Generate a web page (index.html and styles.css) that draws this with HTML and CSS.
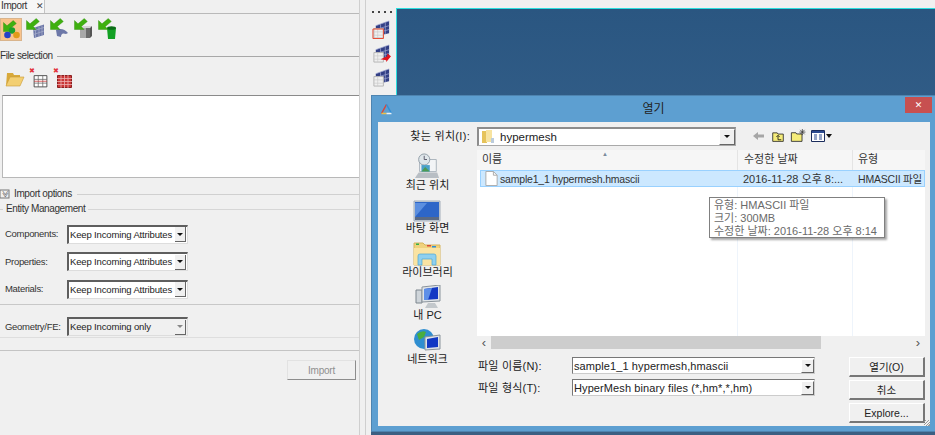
FILE: index.html
```html
<!DOCTYPE html>
<html lang="ko">
<head>
<meta charset="utf-8">
<title>Import</title>
<link rel="stylesheet" href="styles.css">
</head>
<body>
<svg class="defs" width="0" height="0">
  <defs>
    <symbol id="arrow" viewBox="0 0 14 12"><path d="M1 2.500 L1 11.500 L10.500 11.500 L7.800 8.500 L13.800 3.500 L10.800 .5 L4.500 5.800 Z" fill="#3fb010" stroke="#2c8a08" stroke-width=".4"/></symbol>
    <symbol id="grid" viewBox="0 0 20 20">
      <path d="M1.500 3.500H18.500V18.500H1.500Z" fill="#fff" stroke="#444" stroke-width="1.200"/>
      <path d="M1.500 8.500H18.500M1.500 13.500H18.500M7 3.500V18.500M13 3.500V18.500" stroke="#666"/>
      <path d="M1.500 11H18.500" stroke="#c33"/>
    </symbol>
    <symbol id="shell" viewBox="0 0 20 20">
      <path d="M4 6 L18 1 V14 L4 17Z" fill="#323f85"/>
      <path d="M4 6 L18 1 M4 10 L18 6 M4 14 L18 10 M9 4.500V16 M14 3V15" stroke="#9aa3cf" stroke-width=".8" fill="none"/>
      <path d="M2 9H12V19H2Z" fill="#efefef" stroke="#b5b5b5"/>
      <path d="M2 12.500H12M2 16H12M6 9V19" stroke="#c8c8c8" stroke-width=".7"/>
    </symbol>
    <symbol id="yfolder" viewBox="0 0 16 16"><path d="M1.500 3.500H7L8 5H14.500V14H1.500Z" fill="#f5ec7a" stroke="#222"/></symbol>
  </defs>
</svg>

<main class="app">
  <section class="panel">
    <div class="tabbar"><div class="tab"><span>Import</span><span class="tab-x">✕</span></div></div>

    <div class="toolbar">
      <span class="tool tool-on">
        <svg width="22" height="22" viewBox="0 0 22 22"><use href="#arrow" x="2" y="1" width="15" height="12"/><circle cx="12" cy="11.500" r="3.200" fill="#1aa02c"/><circle cx="7.500" cy="16" r="3.300" fill="#2340c8"/><circle cx="16.500" cy="16" r="3.300" fill="#e09a1a"/></svg>
      </span>
      <span class="tool">
        <svg width="22" height="22" viewBox="0 0 22 22"><path d="M9 10 L20 6.500 V17 L10 20Z" fill="#6d78a8"/><path d="M11.500 9.500V19.500M15 8.500V18.500M18 7.500V17.500M9 13 L20 9.500M9.500 16.500 L20 13" stroke="#a9b0cd" stroke-width=".7"/><use href="#arrow" x="1" y="0" width="15" height="12"/></svg>
      </span>
      <span class="tool">
        <svg width="22" height="22" viewBox="0 0 22 22"><path d="M8 12 Q15 9 20 15 L18 16 Q13 14 13 19 L9 18Z" fill="#6d78a8"/><use href="#arrow" x="1" y="0" width="15" height="12"/></svg>
      </span>
      <span class="tool">
        <svg width="22" height="22" viewBox="0 0 22 22"><path d="M8 10H18V20H8Z" fill="#a8a8a8"/><path d="M14 10H18V20H14Z" fill="#6b6b6b"/><path d="M8 10 L11 8H20 L18 10Z" fill="#d4d4d4"/><path d="M18 10 L20 8V18 L18 20Z" fill="#555"/><use href="#arrow" x="1" y="0" width="15" height="12"/></svg>
      </span>
      <span class="tool">
        <svg width="22" height="22" viewBox="0 0 22 22"><path d="M11 10H20L19 21H12Z" fill="#13a124"/><ellipse cx="15.500" cy="10" rx="4.500" ry="1.800" fill="#0c6d17"/><use href="#arrow" x="1" y="0" width="15" height="12"/></svg>
      </span>
    </div>

    <div class="legend legend-file"><span>File selection</span><i></i></div>

    <div class="file-tools">
      <svg class="file-tool" width="20" height="18" viewBox="0 0 20 18"><path d="M1 16 L2 3H8L9 5H15V7H6Z" fill="#d8a93a"/><path d="M1 16 L5 7H19L15 16Z" fill="#f3cf72" stroke="#c99a35" stroke-width=".6"/></svg>
      <span class="file-tool tool-del"><span class="del-x">✖</span><svg width="15" height="15" viewBox="0 0 20 20"><use href="#grid" width="20" height="20"/></svg></span>
      <span class="file-tool tool-del"><span class="del-x">✖</span><svg width="15" height="13" viewBox="0 0 15 13"><path d="M.5 .5H14.500V12.500H.5Z" fill="#c93636" stroke="#8c2020"/><path d="M0 3.500H15M0 6.500H15M0 9.500H15M4 0V13M7.500 0V13M11 0V13" stroke="#eeb0b0" stroke-width=".8"/></svg></span>
    </div>

    <div class="filelist"></div>

    <div class="legend legend-options"><span class="chev">≫</span><span>Import options</span><i></i></div>
    <div class="legend legend-entity"><b></b><span>Entity Management</span><i></i></div>

    <div class="form-row"><span class="form-label">Components:</span><div class="combo"><span>Keep Incoming Attributes</span><span class="combo-btn"></span></div></div>
    <div class="form-row"><span class="form-label">Properties:</span><div class="combo"><span>Keep Incoming Attributes</span><span class="combo-btn"></span></div></div>
    <div class="form-row"><span class="form-label">Materials:</span><div class="combo"><span>Keep Incoming Attributes</span><span class="combo-btn"></span></div></div>
    <hr class="rule rule-a">
    <div class="form-row form-row-geo"><span class="form-label">Geometry/FE:</span><div class="combo combo-off"><span>Keep Incoming only</span><span class="combo-btn"></span></div></div>
    <hr class="rule rule-b">
    <hr class="rule rule-c">
    <div class="import-row"><button class="import-btn" type="button">Import</button></div>
  </section>

  <aside class="strip">
    <div class="grip"></div>
    <svg class="strip-icon" width="19" height="19" viewBox="0 0 20 20"><use href="#shell" width="20" height="20"/><path d="M1 9.500H12V19.500H1Z" fill="none" stroke="#e8452c"/></svg>
    <svg class="strip-icon" width="19" height="19" viewBox="0 0 20 20"><use href="#shell" width="20" height="20"/><path d="M9 16 L16 13 L16 10 L20 13 L15 19 L15 17Z" fill="#e2141c"/></svg>
    <svg class="strip-icon" width="19" height="19" viewBox="0 0 20 20"><use href="#shell" width="20" height="20"/></svg>
  </aside>

  <div class="canvas"></div>
</main>

<section class="dialog">
  <header class="titlebar">
    <svg class="app-logo" width="13" height="13" viewBox="0 0 13 13"><path d="M6.500 1.500 L1.500 10.500" stroke="#d6473a" stroke-width="1.500"/><path d="M6.500 1.500 L11.500 10.500" stroke="#2f8fd8" stroke-width="1.500"/><path d="M1.500 10.500 H6.500" stroke="#e8c04a" stroke-width="1.500"/><path d="M6.500 10.500 H11.500" stroke="#eef2f6" stroke-width="1.500"/></svg>
    <h1 class="dialog-title">열기</h1>
    <button class="close-btn" type="button">✕</button>
  </header>
  <div class="client">
    <div class="lookin">
      <span class="lookin-label">찾는 위치(I):</span>
      <div class="lookin-combo">
        <svg width="14" height="15" viewBox="0 0 14 15"><path d="M1 2H6V14H1Z" fill="#e6c35a"/><path d="M5 1H11V13H5Z" fill="#f7e3a0"/><path d="M10 9H13V14H10Z" fill="#bcd"/></svg>
        <span class="lookin-text">hypermesh</span>
        <span class="win-btn"></span>
      </div>
      <div class="nav-tools">
        <svg width="14" height="12" viewBox="0 0 14 12"><path d="M1 6 L6 2V4.500H12V7.500H6V10Z" fill="#a6a6a6"/></svg>
        <svg width="14" height="13" viewBox="0 0 16 16"><use href="#yfolder" width="16" height="16"/><path d="M8 12V7M6 8.500 L8 6.500 L10 8.500M8 12H12" stroke="#111" fill="none"/></svg>
        <svg width="16" height="14" viewBox="0 0 18 16"><use href="#yfolder" y="1" width="15" height="15"/><path d="M14 0V7M10.500 3.500H17.500M11.500 1 L16.500 6M16.500 1 L11.500 6" stroke="#333" stroke-width=".8"/></svg>
        <svg width="21" height="12" viewBox="0 0 21 12"><path d="M.5 .5H13.500V11.500H.5Z" fill="#fff" stroke="#1a2c5c"/><path d="M1 1H13V3H1Z" fill="#2c4a90"/><path d="M3 5H6M3 7H6M3 9H6M8 5H11M8 7H11M8 9H11" stroke="#2c4a90"/><path d="M15 4H21L18 8Z" fill="#111"/></svg>
      </div>
    </div>

    <div class="browser">
      <nav class="places">
        <div class="place">
          <svg width="28" height="26" viewBox="0 0 28 28"><path d="M6 7H24V20H6Z" fill="#f2f4f6" stroke="#a9b2bb"/><circle cx="11" cy="7" r="6" fill="#dfe6ea" stroke="#8d99a3"/><path d="M11 3V7H14" stroke="#556" fill="none"/><path d="M8 13H17V20H8Z" fill="#4aa0c8"/><path d="M8 20 L12 15 L17 20Z" fill="#4d9a52"/><path d="M1 27 L5 21H25 L27 27Z" fill="#b8bec4"/></svg>
          <span>최근 위치</span>
        </div>
        <div class="place">
          <svg width="28" height="22" viewBox="0 0 28 22"><path d="M1 1H27V21H1Z" fill="#c9d2dc" stroke="#a3aeba"/><path d="M2 2H26V17H2Z" fill="#2d66c8"/><path d="M2 17 L14 3H2Z" fill="#5b8fe0"/><path d="M2 17H26V20H2Z" fill="#5a6a84"/></svg>
          <span>바탕 화면</span>
        </div>
        <div class="place">
          <svg width="28" height="26" viewBox="0 0 28 26"><path d="M1 3H10L12 5H27V25H1Z" fill="#f0d27c" stroke="#d6b45c"/><path d="M1 8H27V25H1Z" fill="#fae3a2"/><path d="M3 3.500H6V5H3Z" fill="#33b14a"/><path d="M14 5H18V6.500H14Z" fill="#d94b3a"/><path d="M19 6H23V7.500H19Z" fill="#2f8fd8"/><path d="M5 25V16Q5 14 7 14H21Q23 14 23 16V25H19V19H9V25Z" fill="#8fd0ef" stroke="#4ca6d4" stroke-width=".7"/></svg>
          <span>라이브러리</span>
        </div>
        <div class="place">
          <svg width="28" height="24" viewBox="0 0 28 24"><path d="M2 5H8V18H2Z" fill="#cfd5da" stroke="#7d868e"/><path d="M8 2 L26 0V16 L8 17Z" fill="#dfe4e8" stroke="#8a939b"/><path d="M10 4 L24 2V14 L10 15Z" fill="#1238c4"/><path d="M10 4 L18 3 L14 15 L10 15Z" fill="#5d8fe8"/><path d="M11 23 L14 18H21 L24 23Z" fill="#c3c8cc"/></svg>
          <span>내 PC</span>
        </div>
        <div class="place">
          <svg width="28" height="25" viewBox="0 0 28 25"><circle cx="11" cy="11" r="10" fill="#2f8ed0"/><path d="M4 6 Q9 2 13 4 L11 9 L6 12Z M12 14 L18 13 L16 20 L12 20Z" fill="#49ad3f"/><path d="M12 9 L27 7V21 L12 22Z" fill="#dfe4e8" stroke="#8a939b"/><path d="M14 11 L25 9V19 L14 20Z" fill="#1238c4"/></svg>
          <span>네트워크</span>
        </div>
      </nav>

      <div class="files">
        <div class="listview">
          <div class="col-head">
            <span class="th th-name">이름<i class="sort">▲</i></span>
            <span class="th th-date">수정한 날짜</span>
            <span class="th th-type">유형</span>
          </div>
          <div class="file-row">
            <span class="td td-name">
              <svg width="13" height="15" viewBox="0 0 13 16"><path d="M.5 .5H8.500L12.500 4.500V15.500H.5Z" fill="#fff" stroke="#a9a9a9"/><path d="M8.500 .5V4.500H12.500" fill="none" stroke="#a9a9a9"/></svg>
              <span>sample1_1 hypermesh.hmascii</span>
            </span>
            <span class="td td-date">2016-11-28 오후 8:...</span>
            <span class="td td-type">HMASCII 파일</span>
          </div>
          <div class="col-fill"><i class="col-line col-line-a"></i><i class="col-line col-line-b"></i></div>
          <div class="hscroll">
            <span class="hs-arrow">‹</span>
            <span class="hs-thumb"></span>
            <span class="hs-arrow hs-arrow-r">›</span>
          </div>
        </div>
      </div>
    </div>

    <div class="bottom">
      <div class="bottom-fields">
        <div class="field">
          <label class="field-label">파일 이름(N):</label>
          <div class="field-box"><span>sample1_1 hypermesh,hmascii</span><span class="win-btn"></span></div>
        </div>
        <div class="field">
          <label class="field-label">파일 형식(T):</label>
          <div class="field-box"><span>HyperMesh binary files (*,hm*,*,hm)</span><span class="win-btn"></span></div>
        </div>
      </div>
      <div class="bottom-btns">
        <button class="win-action" type="button">열기(O)</button>
        <button class="win-action" type="button">취소</button>
        <button class="win-action" type="button">Explore...</button>
      </div>
    </div>
    <span class="size-grip"></span>
  </div>

  <div class="tooltip">
    <div>유형: HMASCII 파일</div>
    <div>크기: 300MB</div>
    <div>수정한 날짜: 2016-11-28 오후 8:14</div>
  </div>
</section>
</body>
</html>
```

FILE: styles.css
```css
* { box-sizing: border-box; }
html, body { margin: 0; height: 100%; overflow: hidden; }
body {
  width: 935px;
  height: 435px;
  background: #f0f0f0;
  color: #222;
  font: 10px/12px "Liberation Sans", "Noto Sans CJK KR", sans-serif;
  position: relative;
}
.defs { position: absolute; }
.app { display: flex; height: 435px; }

/* left panel */
.panel {
  width: 360px;
  height: 435px;
  border-right: 1px solid #cfcfcf;
  display: flex;
  flex-direction: column;
  flex: none;
  letter-spacing: -.4px;
  color: #333;
}
.tabbar { height: 14px; border-bottom: 1px solid #b9b9b9; flex: none; }
.tab {
  width: 45px;
  height: 13px;
  padding-left: 1px;
  background: #f7f7f7;
  border-right: 1px solid #c4c4c4;
  display: flex;
  gap: 9px;
  line-height: 12px;
}
.tab-x { font: 9px/12px "DejaVu Sans", sans-serif; color: #444; }
.toolbar { display: flex; gap: 2px; padding: 4px 0 0; height: 36px; flex: none; }
.tool { width: 22px; height: 23px; display: block; }
.tool svg { display: block; }
.tool-on { background: #f9c38c; border: 1px solid #d9b48c; }
.tool-on svg { margin: 0 -1px; }

.legend { display: flex; align-items: center; gap: 3px; flex: none; height: 12px; }
.legend i { flex: 1; height: 1px; background: #b4b4b4; }
.legend-file { margin-bottom: 5px; }
.legend-file i { background: #a8a8a8; margin-left: 1px; }
.file-tools { display: flex; height: 21px; padding-left: 5px; gap: 4px; align-items: flex-end; flex: none; }
.file-tool { flex: none; }
.tool-del { position: relative; width: 20px; height: 20px; display: flex; align-items: flex-end; justify-content: flex-end; padding-right: 1px; }
.tool-del svg { display: block; }
.del-x { position: absolute; left: 0; top: -1px; color: #e2333a; font-size: 7px; line-height: 8px; }
.filelist {
  height: 83px;
  margin: 7px 0 0 2px;
  background: #fff;
  border: 1px solid #b8b8b8;
  border-top-color: #8a8a8a;
  border-right: 0;
  flex: none;
}
.legend-options { margin-top: 10px; gap: 5px; height: 12px; }
.chev {
  width: 9px;
  height: 10px;
  border: 1px solid #777;
  font-size: 7px;
  line-height: 8px;
  text-align: center;
  transform: rotate(90deg);
  color: #333;
  letter-spacing: 0;
}
.legend-options i { background: #d0d0d0; }
.legend-entity { margin-top: 2px; height: 14px; gap: 3px; }
.legend-entity b { width: 3px; height: 1px; background: #d0d0d0; }
.legend-entity i { background: #d6d6d6; }
.form-row { display: flex; align-items: center; height: 20px; margin-top: 7.500px; padding-left: 5px; flex: none; }
.legend-entity + .form-row { margin-top: 8px; }
.form-label { width: 62px; font-size: 9.500px; letter-spacing: -.3px; }
.combo {
  width: 121px;
  min-width: 0;
  height: 19px;
  background: #fff;
  border: 1px solid #ddd;
  border-top: 2px solid #5e5e5e;
  border-left: 2px solid #5e5e5e;
  display: flex;
  align-items: center;
  justify-content: space-between;
  padding-left: 1px;
  font-size: 9.500px;
  letter-spacing: -.15px;
  white-space: nowrap;
  overflow: hidden;
  color: #222;
}
.combo-btn, .win-btn {
  display: flex;
  align-items: center;
  justify-content: center;
  background: #f0f0f0;
  flex: none;
}
.combo-btn {
  width: 11px;
  height: 15px;
  margin-right: 1px;
  border-right: 1px solid #666;
  border-bottom: 1px solid #666;
}
.combo-btn::before, .win-btn::before {
  content: "";
  border-left: 3px solid transparent;
  border-right: 3px solid transparent;
  border-top: 3px solid #111;
}
.combo-off { background: #f0f0f0; }
.combo-off .combo-btn::before { border-top-color: #888; }
.rule { border: 0; height: 1px; margin: 0; flex: none; }
.rule-a { background: #c8c8c8; margin-top: 5px; }
.form-row-geo { margin-top: 12px; height: 19px; }
.rule-b { background: #dedede; margin-top: 1px; }
.rule-c { background: #c4c4c4; margin-top: 12px; }
.import-row { display: flex; justify-content: flex-end; padding: 9px 3px 0 0; }
.import-btn {
  width: 69px;
  height: 20px;
  background: #f0f0f0;
  border: 1px solid #e2e2e2;
  border-right-color: #8d8d8d;
  border-bottom-color: #8d8d8d;
  color: #8f8f8f;
  font: 10px "Liberation Sans", sans-serif;
  letter-spacing: -.2px;
  padding: 0;
}

/* tool strip */
.strip {
  width: 31px;
  border-left: 1px solid #cfcfcf;
  margin-left: 5px;
  padding: 11px 0 0 6px;
  flex: none;
  display: flex;
  flex-direction: column;
}
.grip { width: 20px; height: 2px; margin-bottom: 7px; background: repeating-linear-gradient(90deg, #444 0 2px, transparent 2px 6px); }
.strip-icon { display: block; margin-bottom: 5px; }

/* canvas */
.canvas {
  flex: 1;
  margin-top: 8px;
  background: linear-gradient(#2a5681, #3c668f 60%, #335b82);
  border-top: 1px solid #2bdede;
  border-left: 1px solid #2bdede;
}

/* dialog window */
.dialog {
  position: absolute;
  left: 371px;
  top: 95px;
  width: 564px;
  height: 337px;
  background: #5d9fd1;
  border: 1px solid #4e84b0;
  border-right: 0;
  box-shadow: 0 3px 0 #3c5f82;
  display: flex;
  flex-direction: column;
  font-family: "Liberation Sans", "Noto Sans CJK KR", sans-serif;
  color: #222;
}
.titlebar { height: 26px; position: relative; flex: none; display: flex; justify-content: center; }
.app-logo { position: absolute; left: 8px; top: 7px; }
.dialog-title { margin: 0; font-size: 12px; font-weight: 400; line-height: 26px; color: #222; }
.close-btn {
  position: absolute;
  right: 3px;
  top: 1px;
  width: 27px;
  height: 16px;
  padding: 0;
  border: 0;
  background: #c75050;
  color: #fff;
  font: 700 9px/16px "DejaVu Sans", sans-serif;
}
.client {
  margin: 0 5px 5px 6px;
  flex: 1;
  background: #f0f0f0;
  display: flex;
  flex-direction: column;
  position: relative;
}
.lookin { display: flex; align-items: center; height: 28px; flex: none; }
.lookin-label { width: 99px; text-align: right; padding-right: 7px; font-size: 11px; letter-spacing: .3px; white-space: nowrap; }
.lookin-combo {
  width: 259px;
  height: 19px;
  background: #fff;
  border: 1px solid #a9a9a9;
  border-left: 2px solid #8d8d8d;
  border-top: 2px solid #8d8d8d;
  display: flex;
  align-items: center;
  gap: 5px;
  padding-left: 2px;
  font-size: 11.500px;
}
.lookin-text { flex: 1; }
.win-btn {
  width: 16px;
  height: 16px;
  border: 1px solid #fff;
  border-right-color: #666;
  border-bottom-color: #666;
}
.nav-tools { display: flex; align-items: center; gap: 5px; margin-left: 16px; }
.nav-tools svg { display: block; }

.browser { display: flex; height: 199px; flex: none; }
.places { width: 99px; flex: none; display: flex; flex-direction: column; align-items: center; }
.place { height: 43.500px; flex: none; display: flex; flex-direction: column; align-items: center; justify-content: flex-end; font-size: 11px; line-height: 13px; white-space: nowrap; padding-bottom: 2px; }
.place svg { display: block; }
.files { flex: 1; min-width: 0; }
.listview { width: 448px; height: 199px; background: #fff; display: flex; flex-direction: column; }
.col-head { display: flex; height: 20px; background: #f6f6f6; font-size: 11px; line-height: 18px; flex: none; }
.th { display: block; padding-left: 5px; position: relative; color: #333; }
.th-name { width: 260px; }
.th-date { width: 115px; border-left: 1px solid #e4e4e4; padding-left: 6px; }
.th-type { flex: 1; border-left: 1px solid #e4e4e4; padding-left: 5px; }
.sort { position: absolute; left: 125px; top: -5px; font-size: 6px; font-style: normal; color: #7b8b9c; }
.file-row {
  display: flex;
  height: 17px;
  margin-left: 3px;
  background: #cce8ff;
  border: 1px solid #99d1ff;
  align-items: center;
  font-size: 11px;
  flex: none;
  color: #333;
}
.td { display: block; white-space: nowrap; }
.td-name { width: 259px; display: flex; align-items: center; gap: 2px; padding-left: 4px; font-size: 10.500px; letter-spacing: -.2px; }
.td-name svg { flex: none; }
.td-date { width: 115px; padding-left: 3px; }
.td-type { flex: 1; padding-left: 3px; font-size: 10.500px; letter-spacing: -.2px; }
.col-fill { flex: 1; position: relative; }
.col-line { position: absolute; top: 0; bottom: 0; width: 1px; background: #eef4fb; }
.col-line-a { left: 260px; }
.col-line-b { left: 375px; }
.hscroll { height: 13px; background: #f0f0f0; display: flex; align-items: center; flex: none; }
.hs-arrow { width: 14px; text-align: center; font-size: 13px; line-height: 12px; color: #555; flex: none; }
.hs-thumb { width: 330px; height: 13px; background: #cdcdcd; }
.hs-arrow-r { margin-left: auto; }

.bottom { display: flex; flex: 1; padding-top: 8px; }
.bottom-fields { display: flex; flex-direction: column; gap: 5px; }
.field { display: flex; align-items: center; height: 17px; }
.field-label { width: 194px; padding-left: 100px; font-size: 11px; letter-spacing: .2px; white-space: nowrap; color: #222; }
.field-box {
  width: 243px;
  height: 17px;
  background: #fff;
  border: 1px solid #ccc;
  border-left: 1px solid #777;
  border-top: 1px solid #777;
  display: flex;
  align-items: center;
  justify-content: space-between;
  padding-left: 1px;
  font-size: 11px;
  letter-spacing: .1px;
  white-space: nowrap;
}
.field-box .win-btn { height: 14px; width: 13px; }
.bottom-btns { display: flex; flex-direction: column; gap: 3px; margin-left: 34px; }
.win-action {
  width: 76px;
  height: 20px;
  padding: 0;
  background: #f0f0f0;
  border: 1px solid #fff;
  border-right: 2px solid #777;
  border-bottom: 2px solid #777;
  font: 10.500px "Liberation Sans", "Noto Sans CJK KR", sans-serif;
  color: #222;
}
.size-grip {
  position: absolute;
  right: 0;
  bottom: 0;
  width: 6px;
  height: 6px;
  background: repeating-linear-gradient(135deg, transparent 0 1px, #9a9a9a 1px 2px);
}

.tooltip {
  position: absolute;
  left: 337px;
  top: 101px;
  width: 176px;
  height: 41px;
  padding: 1px 4px;
  background: #fff;
  border: 1px solid #808080;
  box-shadow: 2px 2px 2px rgba(0,0,0,.35);
  font-size: 11px;
  line-height: 13px;
  color: #6a6a6a;
  white-space: nowrap;
}
```
